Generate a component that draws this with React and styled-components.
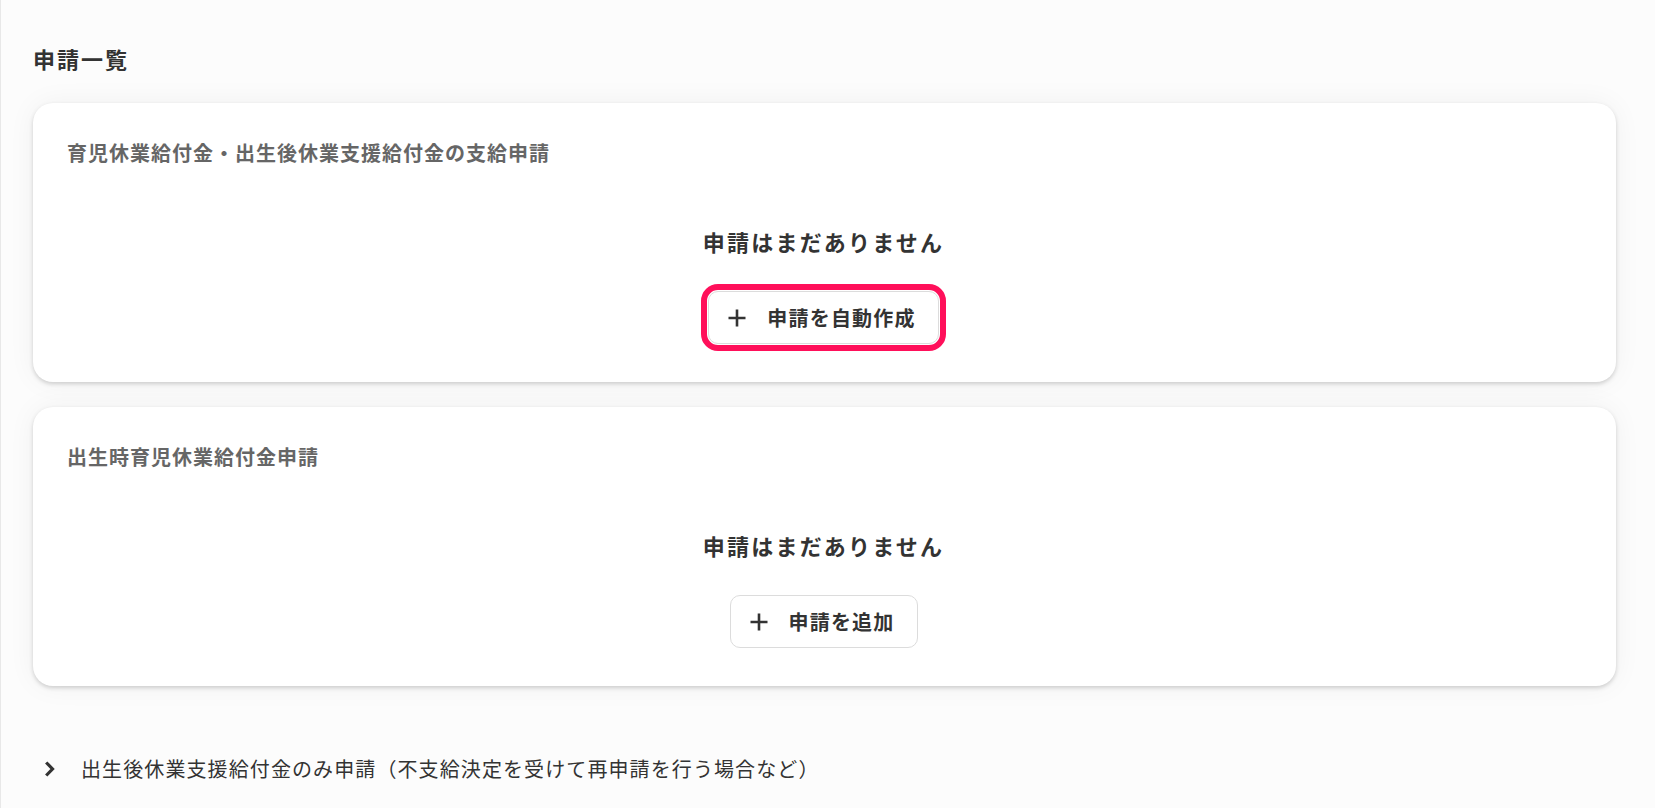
import React from "react";
import styled, { createGlobalStyle } from "styled-components";

const GlobalStyle = createGlobalStyle`
  html, body {
    margin: 0;
    padding: 0;
    background: #fcfcfc;
  }
  body {
    font-family: "Noto Sans CJK JP", "Noto Sans", sans-serif;
    color: #333;
  }
  * { box-sizing: border-box; }
`;

const Page = styled.main`
  min-height: 808px;
  padding: 42px 39px 40px 32px;
  border-left: 1px solid #e8e8e8;
  background: #fcfcfc;
`;

const Heading = styled.h2`
  margin: 0 0 29px 0;
  font-size: 22px;
  line-height: 32px;
  font-weight: 700;
  letter-spacing: 0.09em;
  color: #333;
`;

const CardList = styled.div`
  display: flex;
  flex-direction: column;
  gap: 25px;
`;

const Card = styled.section`
  background: #fff;
  border-radius: 20px;
  padding: 36px 36px 38px 34px;
  box-shadow: 0 2px 4px rgba(0, 0, 0, 0.17), 0 0 28px rgba(0, 0, 0, 0.05);
`;

const CardTitle = styled.h3`
  margin: 0;
  font-size: 20px;
  line-height: 28px;
  font-weight: 700;
  letter-spacing: 0.05em;
  color: #666;
`;

const EmptyState = styled.div`
  display: flex;
  flex-direction: column;
  align-items: center;
  padding-top: 58px;
  gap: 34px;
`;

const EmptyText = styled.p`
  margin: 0;
  font-size: 22px;
  line-height: 32px;
  font-weight: 700;
  letter-spacing: 0.1em;
  color: #333;
`;

const ActionButton = styled.button`
  display: inline-flex;
  align-items: center;
  gap: 21px;
  height: 53px;
  padding: 0 22px 0 19px;
  background: #fff;
  border: 1px solid #dcdcdc;
  border-radius: 10px;
  font-family: inherit;
  font-size: 20px;
  font-weight: 700;
  letter-spacing: 0.06em;
  color: #333;
  cursor: pointer;
  outline: ${(p) => (p.$focused ? "6px solid #ff0f5a" : "none")};
  outline-offset: 1px;
`;

const PlusIcon = () => (
  <svg width="18" height="18" viewBox="0 0 18 18" aria-hidden="true">
    <path d="M9 0.5V17.5M0.5 9H17.5" stroke="#333" strokeWidth="2.6" fill="none" />
  </svg>
);

const Disclosure = styled.button`
  display: flex;
  align-items: center;
  gap: 26px;
  margin-top: 69px;
  padding: 0 0 0 11px;
  background: none;
  border: none;
  font-family: inherit;
  font-size: 20px;
  line-height: 28px;
  font-weight: 400;
  letter-spacing: 0.055em;
  color: #333;
  cursor: pointer;
`;

const Chevron = () => (
  <svg width="11" height="16" viewBox="0 0 11 16" aria-hidden="true">
    <path d="M2.2 1.5L8.5 8L2.2 14.5" stroke="#333" strokeWidth="3.2" fill="none" />
  </svg>
);

const sections = [
  {
    title: "育児休業給付金・出生後休業支援給付金の支給申請",
    button: "申請を自動作成",
    focused: true,
  },
  {
    title: "出生時育児休業給付金申請",
    button: "申請を追加",
    focused: false,
  },
];

export default function App() {
  return (
    <>
      <GlobalStyle />
      <Page>
        <Heading>申請一覧</Heading>
        <CardList>
          {sections.map((s) => (
            <Card key={s.title}>
              <CardTitle>{s.title}</CardTitle>
              <EmptyState>
                <EmptyText>申請はまだありません</EmptyText>
                <ActionButton $focused={s.focused}>
                  <PlusIcon />
                  {s.button}
                </ActionButton>
              </EmptyState>
            </Card>
          ))}
        </CardList>
        <Disclosure>
          <Chevron />
          出生後休業支援給付金のみ申請（不支給決定を受けて再申請を行う場合など）
        </Disclosure>
      </Page>
    </>
  );
}
